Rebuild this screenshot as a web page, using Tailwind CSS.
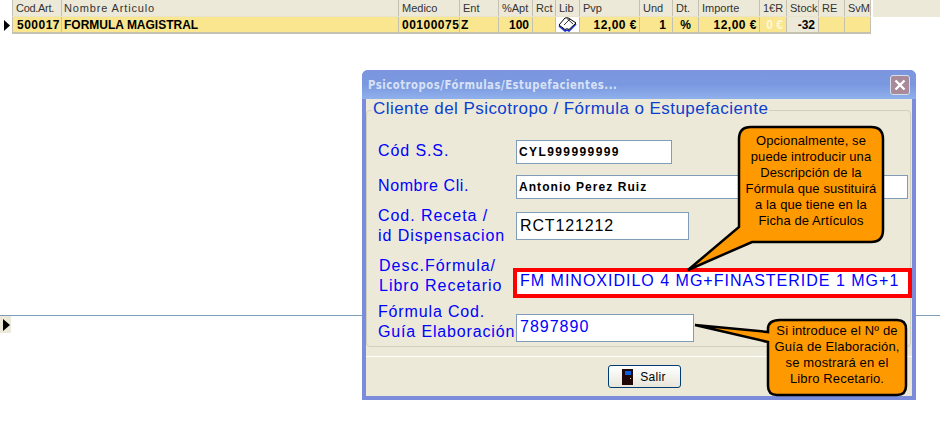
<!DOCTYPE html>
<html lang="en">
<head>
<meta charset="UTF-8">
<title>Psicotropos</title>
<script src="https://cdn.jsdelivr.net/npm/@tailwindcss/browser@4"></script>
</head>
<body class="bg-white">
<div class="relative w-[940px] h-[434px] overflow-hidden font-['Liberation_Sans',sans-serif] text-black">

	<!-- Grid -->
	<div class="flex h-[16px] text-[11px] leading-[16px] text-[#333]">
		<div class="w-[12px]"></div>
		<div class="w-[49px] border-l border-[#c4c1b0] pl-[3px] bg-[#ece9d8] tracking-[-0.3px]">Cod.Art.</div>
		<div class="w-[337px] border-l border-[#c4c1b0] pl-[2px] bg-[#ece9d8] tracking-[0.85px]">Nombre Articulo</div>
		<div class="w-[61px] border-l border-[#c4c1b0] pl-[3px] bg-[#ece9d8]">Medico</div>
		<div class="w-[39px] border-l border-[#c4c1b0] pl-[3px] bg-[#ece9d8]">Ent</div>
		<div class="w-[34px] border-l border-[#c4c1b0] pl-[3px] bg-[#ece9d8]">%Apt</div>
		<div class="w-[23px] border-l border-[#c4c1b0] pl-[3px] bg-[#ece9d8]">Rct</div>
		<div class="w-[24px] border-l border-[#c4c1b0] pl-[3px] bg-[#ece9d8]">Lib</div>
		<div class="w-[60px] border-l border-[#c4c1b0] pl-[3px] bg-[#ece9d8]">Pvp</div>
		<div class="w-[33px] border-l border-[#c4c1b0] pl-[3px] bg-[#ece9d8]">Und</div>
		<div class="w-[26px] border-l border-[#c4c1b0] pl-[3px] bg-[#ece9d8]">Dt.</div>
		<div class="w-[61px] border-l border-[#c4c1b0] pl-[3px] bg-[#ece9d8]">Importe</div>
		<div class="w-[27px] border-l border-[#c4c1b0] pl-[3px] bg-[#ece9d8]">1€R</div>
		<div class="w-[32px] border-l border-[#c4c1b0] pl-[3px] bg-[#ece9d8]">Stock</div>
		<div class="w-[26px] border-l border-[#c4c1b0] pl-[3px] bg-[#ece9d8]">RE</div>
		<div class="w-[27px] border-x border-[#c4c1b0] pl-[3px] bg-[#ece9d8]">SvM</div>
		<div class="flex-1 ml-[2px] h-[17px] bg-[#ece9d8]"></div>
	</div>
	<div class="flex h-[18px] text-[12px] leading-[17px] font-bold">
		<div class="w-[12px] flex items-center pl-[4px]">
			<svg width="6" height="11" viewBox="0 0 6 11"><path d="M0 0 L6 5.5 L0 11 Z" fill="#000"/></svg>
		</div>
		<div class="flex flex-1 max-w-[859px] bg-[#f9e68f] border-b-2 border-t border-[#c4c1b0] border-t-[#e8e4cc]">
			<div class="w-[49px] border-l border-[#c4c1b0] pl-[4px] tracking-[0.5px]">500017</div>
			<div class="w-[337px] border-l border-[#c4c1b0] pl-[2px]">FORMULA MAGISTRAL</div>
			<div class="w-[61px] border-l border-[#c4c1b0] pl-[3px] overflow-hidden whitespace-nowrap tracking-[0.5px]">00100075</div>
			<div class="w-[39px] border-l border-[#c4c1b0] pl-[1px]">Z</div>
			<div class="w-[34px] border-l border-[#c4c1b0] pr-[3px] text-right">100</div>
			<div class="w-[23px] border-l border-[#c4c1b0]"></div>
			<div class="w-[24px] border-l border-[#c4c1b0] bg-white flex items-center justify-center">
				<svg width="19" height="15" viewBox="0 0 19 15" fill="none">
					<path d="M1 9 L7 14 Q9 12.5 11 14 L18 7" stroke="#1a2fd0" stroke-width="1.6"/>
					<path d="M1 8 L7 1 Q10 0 12 2 L18 6 L11 12.5 Q9 11 7 12.5 Z" fill="#fff" stroke="#000"/>
					<path d="M9 1.5 L15 7 M12 2 L6 8" stroke="#000" stroke-width="0.8"/>
				</svg>
			</div>
			<div class="w-[60px] border-l border-[#c4c1b0] pr-[2px] text-right tracking-[0.5px]">12,00 €</div>
			<div class="w-[33px] border-l border-[#c4c1b0] pr-[6px] text-right">1</div>
			<div class="w-[26px] border-l border-[#c4c1b0] text-center">%</div>
			<div class="w-[61px] border-l border-[#c4c1b0] pr-[2px] text-right tracking-[0.5px]">12,00 €</div>
			<div class="w-[27px] border-l border-[#c4c1b0] pr-[3px] text-right text-[#fff8d8]">0 €</div>
			<div class="w-[32px] border-l border-[#c4c1b0] bg-[#ece9d8] pr-[3px] text-right">-32</div>
			<div class="w-[26px] border-l border-[#c4c1b0]"></div>
			<div class="w-[27px] border-x border-[#c4c1b0]"></div>
		</div>
	</div>

	<!-- second grid, mostly behind the dialog -->
	<div class="mt-[281px] border-t border-[#7f9db9] h-[18px] w-full">
		<div class="w-[11px] h-[17px] bg-[#ece9d8] flex items-center pl-[3px]">
			<svg width="7" height="12" viewBox="0 0 7 12"><path d="M0 0 L7 6 L0 12 Z" fill="#000"/></svg>
		</div>
	</div>

	<!-- Dialog -->
	<div class="absolute left-[362px] top-[70px] w-[554px] h-[330px] rounded-t-[6px] bg-[#7b8cdb] p-[4px] pt-0 flex flex-col">
		<div class="h-[29px] -mx-[4px] px-[6px] rounded-t-[6px] bg-gradient-to-b from-[#7b96de] via-[#7a98e0] to-[#8fb0ec] flex items-center justify-between">
			<span class="text-[12px] font-bold tracking-[0.6px] text-[#d9e2f6] font-['DejaVu_Sans',sans-serif] scale-x-[0.843] origin-left whitespace-nowrap">Psicotropos/Fórmulas/Estupefacientes...</span>
			<div class="w-[20px] h-[20px] rounded-[3px] border border-[#d8dfe8] bg-[#a88a9a] flex items-center justify-center">
				<svg width="12" height="12" viewBox="0 0 12 12"><path d="M1.5 1.5 L10.5 10.5 M10.5 1.5 L1.5 10.5" stroke="#fff" stroke-width="2.4"/></svg>
			</div>
		</div>
		<div class="flex-1 bg-[#ece9d8] flex flex-col">
			<!-- Group box -->
			<div class="relative h-[248px] text-[#0000ff]">
				<div class="absolute left-0 right-[1px] top-[11px] bottom-0 border border-[#d0d0bf] rounded-[4px]"></div>
				<div class="absolute left-[6px] top-0 px-[1px] bg-[#ece9d8] text-[#0a3fd0] text-[17px] leading-[20px] tracking-[0.45px] whitespace-nowrap">Cliente del Psicotropo / Fórmula o Estupefaciente</div>

				<div class="relative pt-[41px] pl-[12px] flex flex-col">
					<div class="flex items-center h-[24px]">
						<label class="w-[138px] text-[16px] tracking-[0.9px] -mt-[2px]">Cód S.S.</label>
						<div class="w-[156px] h-[24px] bg-white border border-[#7f9db9] pl-[2px] text-black font-bold text-[12px] leading-[22px] tracking-[1.4px]">CYL999999999</div>
					</div>
					<div class="flex items-center h-[24px] mt-[11px]">
						<label class="w-[138px] text-[16px] tracking-[0.6px] -mt-[2px]">Nombre Cli.</label>
						<div class="w-[392px] h-[24px] bg-white border border-[#7f9db9] pl-[2px] text-black font-bold text-[12px] leading-[22px] tracking-[1.05px]">Antonio Perez Ruiz</div>
					</div>
					<div class="flex items-center h-[28px] mt-[13px]">
						<label class="w-[138px] text-[16px] leading-[20px] tracking-[0.95px] whitespace-nowrap">Cod. Receta /<br>id Dispensacion</label>
						<div class="w-[173px] h-[28px] bg-white border border-[#7f9db9] pl-[3px] text-black text-[16px] leading-[26px] tracking-[0.85px]">RCT121212</div>
					</div>
					<div class="flex items-center h-[30px] mt-[28px]">
						<label class="w-[135px] text-[16px] leading-[20px] tracking-[1px] whitespace-nowrap -mt-[15px] pl-[1px]">Desc.Fórmula/<br>Libro Recetario</label>
						<div class="w-[399px] h-[30px] bg-white border-[4px] border-[#ff0000] pl-[3px] text-[#0000ff] text-[16px] leading-[18px] tracking-[1px] whitespace-nowrap">FM MINOXIDILO 4 MG+FINASTERIDE 1 MG+1</div>
					</div>
					<div class="flex items-center h-[28px] mt-[16px] -ml-[1px]">
						<label class="w-[139px] text-[16px] leading-[20px] tracking-[0.85px] whitespace-nowrap -mt-[12px] pl-[1px]">Fórmula Cod.<br>Guía Elaboración</label>
						<div class="w-[178px] h-[28px] bg-white border border-[#7f9db9] pl-[3px] text-[#0000ff] text-[16px] leading-[24px] tracking-[1px]">7897890</div>
					</div>
				</div>
			</div>
			<!-- Footer -->
			<div class="flex-1 border-t border-white mt-[9px] flex items-start justify-center pt-[8px] pl-[10px]">
				<button class="w-[73px] h-[23px] rounded-[3px] border border-[#003c74] bg-gradient-to-b from-white to-[#e8e6da] flex items-center justify-center gap-[7px] text-[12px] text-black tracking-[0.3px]">
					<svg width="11" height="16" viewBox="0 0 11 16"><rect width="11" height="16" fill="#200808"/><rect x="3" y="2" width="6" height="4" fill="#0a5fe0"/><rect x="8" y="9" width="1" height="1" fill="#e8e0a0"/></svg>
					Salir
				</button>
			</div>
		</div>
	</div>

	<!-- Callout: Descripción -->
	<div class="absolute left-[680px] top-[120px] w-[210px] h-[155px]">
		<svg class="absolute inset-0" width="210" height="155" viewBox="0 0 210 155">
			<path d="M71 7 H191 Q203 7 203 19 V110 Q203 122 191 122 H72 L8 150 L59 107 V19 Q59 7 71 7 Z" fill="#ff9900" stroke="#000" stroke-width="2.5"/>
		</svg>
		<div class="absolute left-[59px] top-[13px] w-[144px] text-center text-[13px] leading-[16px] tracking-[0.1px] text-black">Opcionalmente, se<br>puede introducir una<br>Descripción de la<br>Fórmula que sustituirá<br>a la que tiene en la<br>Ficha de Artículos</div>
	</div>

	<!-- Callout: Guía -->
	<div class="absolute left-[690px] top-[315px] w-[222px] h-[85px]">
		<svg class="absolute inset-0" width="222" height="85" viewBox="0 0 222 85">
			<path d="M90 5 H207 Q216 5 216 14 V71 Q216 80 207 80 H87 Q78 80 78 71 V27 L5 10 L78 17 V14 Q78 5 90 5 Z" fill="#ff9900" stroke="#000" stroke-width="2.5"/>
		</svg>
		<div class="absolute left-[78px] top-[8px] w-[138px] text-center text-[13px] leading-[16px] tracking-[0.15px] text-black">Si introduce el Nº de<br>Guía de Elaboración,<br>se mostrará en el<br>Libro Recetario.</div>
	</div>
</div>
</body>
</html>
